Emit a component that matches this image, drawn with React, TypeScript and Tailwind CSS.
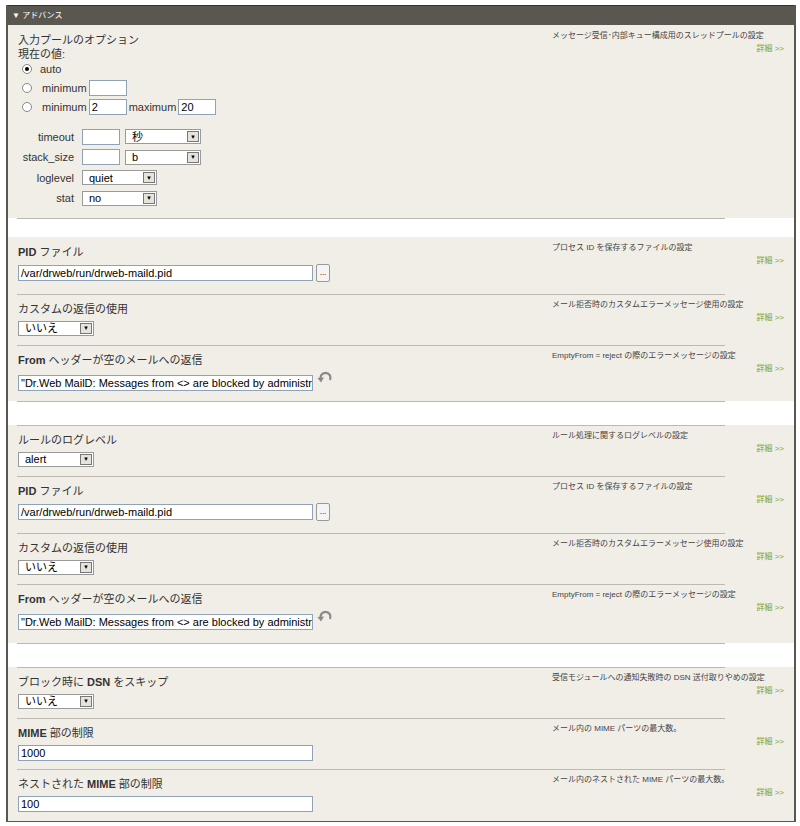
import React from "react";

const font = { fontFamily: '"Liberation Sans", "Noto Sans CJK JP", sans-serif' };

const Sel = ({ v, w }: { v: string; w: string }) => (
  <div className={`${w} h-[15px] bg-white border border-[#9a9a9a] flex items-center justify-between pl-1.5 pr-[1px] text-[11px] text-black`}>
    <span>{v}</span>
    <span className="w-[12px] h-[11px] bg-[#e6e3dc] border border-[#777] flex items-center justify-center text-[6px] leading-none">▼</span>
  </div>
);

const Inp = ({ v, w }: { v?: string; w: string }) => (
  <div className={`${w} h-[16px] bg-white border border-[#8fa2b8] px-[2px] text-[11px] leading-[14px] text-black overflow-hidden whitespace-nowrap`}>{v}</div>
);

const Row = ({ h, title, desc, top = true, children }: { h: string; title: React.ReactNode; desc: string; top?: boolean; children: React.ReactNode }) => (
  <div className={`${h} relative flex bg-[#f1eee8]`}>
    {top && <div className="absolute left-[9px] w-[708px] top-0 h-px bg-[#bdb9b0]" />}
    <div className="flex-1 pl-[10px] pt-[7px]">
      <div className="text-[11px] text-[#333] mb-[3px]">{title}</div>
      {children}
    </div>
    <div className="w-[248px] pt-[5px] pr-[10px] flex flex-col items-end text-[8px]">
      <div className="text-[#444] w-full pl-[6px]">{desc}</div>
      <div className="text-[#7aa41e] mt-[1px]">詳細 &gt;&gt;</div>
    </div>
  </div>
);

const Gap = ({ h }: { h: string }) => (
  <div className={`${h} bg-white relative`}><div className="absolute left-[9px] w-[708px] top-0 h-px bg-[#bdb9b0]" /></div>
);

const Radio = ({ on }: { on?: boolean }) => (
  <span className="w-[10px] h-[10px] rounded-full border border-[#888] bg-white flex items-center justify-center mr-[8px]">
    {on && <span className="w-[4px] h-[4px] rounded-full bg-black" />}
  </span>
);

const Undo = () => (
  <svg width="16" height="14" viewBox="0 0 16 14" className="ml-[4px] -mt-[10px]">
    <path d="M4 9 A5 5 0 1 1 13 9" fill="none" stroke="#888" strokeWidth="2.2" />
    <path d="M0.5 7 L4 11.5 L7 6.5 Z" fill="#888" />
  </svg>
);

const Pid = () => (
  <div className="flex items-center gap-[3px]">
    <Inp w="w-[295px]" v="/var/drweb/run/drweb-maild.pid" />
    <div className="w-[14px] h-[18px] border border-[#999] rounded-[2px] bg-[#f4f4f4] text-[8px] flex items-center justify-center">...</div>
  </div>
);

const Reply = () => (
  <div className="flex items-center mt-[6px]">
    <Inp w="w-[295px]" v={'"Dr.Web MailD: Messages from <> are blocked by administrator.'} />
    <Undo />
  </div>
);

export default function App() {
  return (
    <div className="w-[800px] h-[826px] bg-white pt-[5px] pl-[6px]" style={font}>
      <div className="w-[790px] border-l-2 border-r-2 border-[#5a5750] border-b border-b-[#5a5750]">
        <div className="h-[20px] bg-[#5a5750] text-white text-[8px] flex items-center pl-[4px] border-t border-[#333]">▼ アドバンス</div>
        <Row h="h-[193px]" top={false} title="入力プールのオプション" desc="メッセージ受信･内部キュー構成用のスレッドプールの設定">
          <div className="text-[11px] text-[#333] -mt-[4px] leading-[12px]">現在の値:</div>
          <div className="text-[11px] text-[#333] pl-[4px]">
            <div className="flex items-center h-[19px]"><Radio on />auto</div>
            <div className="flex items-center h-[19px] gap-[2px]"><Radio />minimum <Inp w="w-[38px]" /></div>
            <div className="flex items-center h-[19px] gap-[2px]"><Radio />minimum <Inp w="w-[38px]" v="2" /> maximum <Inp w="w-[38px]" v="20" /></div>
          </div>
          <div className="grid grid-cols-[56px_auto] gap-x-[8px] gap-y-[4px] mt-[12px] text-[11px] text-[#333] items-center">
            <span className="text-right">timeout</span>
            <div className="flex gap-[5px] items-center"><Inp w="w-[38px]" /><Sel w="w-[76px]" v="秒" /></div>
            <span className="text-right">stack_size</span>
            <div className="flex gap-[5px] items-center"><Inp w="w-[38px]" /><Sel w="w-[76px]" v="b" /></div>
            <span className="text-right">loglevel</span>
            <Sel w="w-[75px]" v="quiet" />
            <span className="text-right">stat</span>
            <Sel w="w-[75px]" v="no" />
          </div>
        </Row>
        <Gap h="h-[19px]" />
        <Row h="h-[57px]" top={false} title={<><b>PID</b> ファイル</>} desc="プロセス ID を保存するファイルの設定"><Pid /></Row>
        <Row h="h-[51px]" title="カスタムの返信の使用" desc="メール拒否時のカスタムエラーメッセージ使用の設定"><Sel w="w-[76px]" v="いいえ" /></Row>
        <Row h="h-[56px]" title={<><b>From</b> ヘッダーが空のメールへの返信</>} desc="EmptyFrom = reject の際のエラーメッセージの設定"><Reply /></Row>
        <Gap h="h-[24px]" />
        <Row h="h-[51px]" title="ルールのログレベル" desc="ルール処理に関するログレベルの設定"><Sel w="w-[76px]" v="alert" /></Row>
        <Row h="h-[57px]" title={<><b>PID</b> ファイル</>} desc="プロセス ID を保存するファイルの設定"><Pid /></Row>
        <Row h="h-[51px]" title="カスタムの返信の使用" desc="メール拒否時のカスタムエラーメッセージ使用の設定"><Sel w="w-[76px]" v="いいえ" /></Row>
        <Row h="h-[59px]" title={<><b>From</b> ヘッダーが空のメールへの返信</>} desc="EmptyFrom = reject の際のエラーメッセージの設定"><Reply /></Row>
        <Gap h="h-[24px]" />
        <Row h="h-[51px]" title={<>ブロック時に <b>DSN</b> をスキップ</>} desc="受信モジュールへの通知失敗時の DSN 送付取りやめの設定"><Sel w="w-[76px]" v="いいえ" /></Row>
        <Row h="h-[51px]" title={<><b>MIME</b> 部の制限</>} desc="メール内の MIME パーツの最大数。"><Inp w="w-[295px]" v="1000" /></Row>
        <Row h="h-[52px]" title={<>ネストされた <b>MIME</b> 部の制限</>} desc="メール内のネストされた MIME パーツの最大数。"><Inp w="w-[295px]" v="100" /></Row>
      </div>
    </div>
  );
}
